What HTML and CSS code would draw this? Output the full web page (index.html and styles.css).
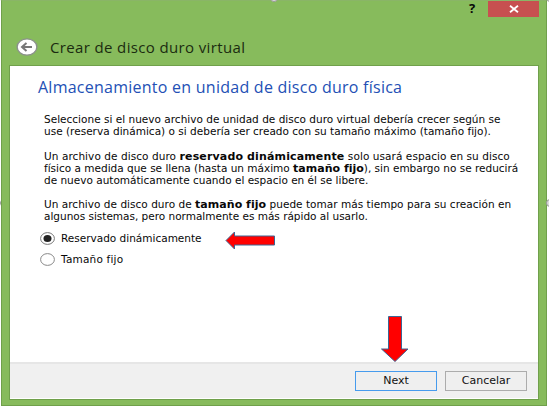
FILE: index.html
```
<!DOCTYPE html>
<html lang="es">
<head>
<meta charset="utf-8">
<title>Crear de disco duro virtual</title>
<link rel="stylesheet" href="styles.css">
</head>
<body>
<i class="handle top"></i><i class="handle left"></i><i class="handle right"></i><i class="handle corner-left"></i><i class="handle corner-right"></i>
<main class="window">
  <div class="controls"><span class="help">?</span><button class="close" aria-label="Cerrar"><svg width="10" height="8" viewBox="0 0 10 8"><path d="M1 .7 9 7.3M9 .7 1 7.3" stroke="#fff" stroke-width="1.8"/></svg></button></div>
  <header class="title">
    <svg width="22" height="18" viewBox="0 0 22 18"><ellipse cx="11" cy="9" rx="9.9" ry="8.1" fill="#fff" stroke="#8b918b" stroke-width="1.4"/><path d="M16 9H6.5M10.5 5 6 9l4.500 4" fill="none" stroke="#777" stroke-width="2"/></svg>
    <h1>Crear de disco duro virtual</h1>
  </header>
  <section class="panel">
    <div class="content">
      <h2>Almacenamiento en unidad de disco duro física</h2>
      <p><span class="l1">Seleccione si el nuevo archivo de unidad de disco duro virtual debería crecer según se</span><span class="l2">use (reserva dinámica) o si debería ser creado con su tamaño máximo (tamaño fijo).</span></p>
      <p><span class="l3">Un archivo de disco duro <b>reservado dinámicamente</b> solo usará espacio en su disco</span><span class="l4">físico a medida que se llena (hasta un máximo <b>tamaño fijo</b>), sin embargo no se reducirá</span><span class="l5">de nuevo automáticamente cuando el espacio en él se libere.</span></p>
      <p><span class="l6">Un archivo de disco duro de <b>tamaño fijo</b> puede tomar más tiempo para su creación en</span><span class="l7">algunos sistemas, pero normalmente es más rápido al usarlo.</span></p>
      <div class="options">
        <label><svg width="15" height="13" viewBox="0 0 15 13"><ellipse cx="7.500" cy="6.500" rx="6.900" ry="5.900" fill="#fff" stroke="#777"/><ellipse cx="7.500" cy="6.500" rx="4" ry="3.600" fill="#222"/></svg><span>Reservado dinámicamente</span></label>
        <label><svg width="15" height="13" viewBox="0 0 15 13"><ellipse cx="7.500" cy="6.500" rx="6.900" ry="5.900" fill="#fff" stroke="#888"/></svg><span class="o2">Tamaño fijo</span></label>
      </div>
    </div>
    <footer><button class="btn primary">Next</button><button class="btn">Cancelar</button></footer>
  </section>
</main>
<svg class="arrow side" width="51" height="19" viewBox="0 0 51 19"><path d="M1 9.500 9.500 1v4H49.500v9H9.500v4Z" fill="#f00" stroke="#3c6694"/></svg>
<svg class="arrow down" width="30" height="48" viewBox="0 0 30 48"><path d="M8.500 1.500h13v32.500H28L15 46.500 1.500 34h7Z" fill="#f00" stroke="#3c6694"/></svg>
</body>
</html>
```
FILE: styles.css
```
* { box-sizing: border-box; }
body { margin: 0; width: 549px; height: 406px; overflow: hidden; background: #fff; padding: 0 2px 0 1px; font: 10.5px/12px "DejaVu Sans", sans-serif; color: #080808; position: relative; }
.window { height: 406px; background: #87bb5c; border: 1px solid #70a04b; border-top-color: #8ab567; display: flex; flex-direction: column; padding: 0 7px; }
.controls { height: 16px; display: flex; justify-content: flex-end; flex: none; }
.help { font: bold 13px/15px "Open Sans", sans-serif; width: 7px; margin-right: 12px; }
.close { width: 51px; height: 16px; background: #c75050; border: 0; padding: 0; display: flex; align-items: center; justify-content: center; }
.title { height: 48px; flex: none; display: flex; align-items: center; padding: 12px 0 0 7px; gap: 12px; }
h1, h2 { font: 15px/20px "Open Sans", sans-serif; margin: 0; white-space: nowrap; }
h1 { color: #1b2b10; letter-spacing: .36px; }
.panel { height: 335px; border: 1px solid #70a04b; background: #fff; flex: none; display: flex; flex-direction: column; }
.content { height: 296px; padding: 11px 0 0 34px; flex: none; }
h2 { color: #2350b5; font-size: 16px; letter-spacing: .25px; height: 36px; margin-left: -6px; }
p { margin: 0 0 12.5px; }
p span { display: block; height: 12px; white-space: nowrap; }
b { font-size: 11px; line-height: 1; }
.l1, .l2 { letter-spacing: .012px; }
.l3 { letter-spacing: .07px; }
.l3 b { letter-spacing: .14px; }
.l4 b { letter-spacing: 0; }
.l6 { letter-spacing: .03px; }
.l6 b { letter-spacing: .04px; }
.l7 { letter-spacing: -.01px; }
.options { display: flex; flex-direction: column; gap: 8px; margin: -3px 0 0 -4px; }
label { display: flex; align-items: center; gap: 6px; height: 13px; white-space: nowrap; }
.o2 { letter-spacing: .2px; }
footer { flex: 1; background: #f0f0f0; border-top: 2px solid #e6e6e6; border-bottom: 1px solid #fff; display: flex; justify-content: flex-end; align-items: flex-start; gap: 8px; padding: 7px 11px 0 0; }
.btn { width: 82px; height: 20px; padding: 0; border: 1px solid #acacac; background: #efefef; font: inherit; font-size: 11px; color: #111; }
.primary { border-color: #469bed; }
.arrow { position: absolute; }
.side { left: 225px; top: 231px; }
.down { left: 380px; top: 315px; }
.handle { position: absolute; width: 8px; height: 8px; border: 1px solid #999; border-radius: 50%; background: #ddd; }
.top { left: 270px; top: -6px; z-index: 1; }
.left { left: -7px; top: 199px; }
.right { left: 546px; top: 199px; }
.corner-left { left: -7px; top: -6px; }
.corner-right { left: 546px; top: -6px; }
```
